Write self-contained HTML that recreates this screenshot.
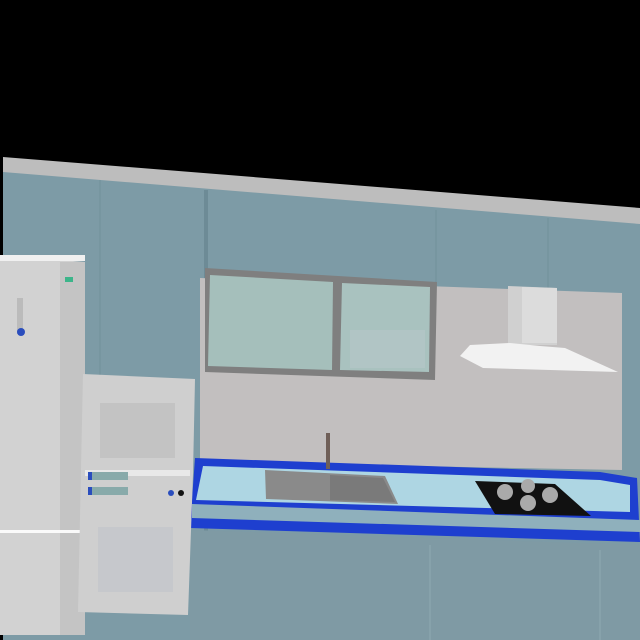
<!DOCTYPE html><html><head><style>body{margin:0;background:#000}svg{display:block}</style></head><body>
<svg width="640" height="640" viewBox="0 0 640 640" xmlns="http://www.w3.org/2000/svg">
<rect width="640" height="640" fill="#000"/>
<!-- ceiling trim -->
<polygon points="3,157 640,208 640,228 3,175" fill="#bdbdbd"/>
<!-- wall cabinets base -->
<polygon points="3,172 640,224 640,640 3,640" fill="#7d9ba6"/>
<polygon points="204,190 208,190 208,640 204,640" fill="#6d8b96"/>
<line x1="100" y1="180" x2="100" y2="375" stroke="#71909b" stroke-width="1"/>
<line x1="436" y1="210" x2="436" y2="282" stroke="#71909b" stroke-width="1"/>
<line x1="548" y1="218" x2="548" y2="290" stroke="#71909b" stroke-width="1"/>
<!-- backsplash -->
<polygon points="200,278 622,293 622,470 200,462" fill="#c2bfbf"/>
<!-- glass cabinets -->
<polygon points="205,268 437,282 435,380 205,372" fill="#7f7f7f"/>
<polygon points="210,275 333,282 332,370 208,366" fill="#a5bfbb"/>
<polygon points="342,283 430,287 429,372 340,370" fill="#a9c2bf"/>
<rect x="350" y="330" width="75" height="38" fill="#b5c6c8" opacity="0.7"/>
<!-- hood -->
<polygon points="508,286 557,288 557,345 508,345" fill="#d0d0d0"/>
<polygon points="522,287 557,288 557,343 522,343" fill="#dcdcdc"/>
<polygon points="470,345 510,343 540,346 565,348 618,372 483,368 460,356" fill="#f2f2f2"/>
<!-- countertop -->
<polygon points="195,458 600,472 637,478 640,542 190,528" fill="#1e3fcf"/>
<polygon points="203,466 600,480 630,485 630,512 196,500" fill="#aed6e3"/>
<polygon points="192,504 640,520 640,532 192,518" fill="#8fb0bc"/>
<polygon points="190,530 640,545 640,640 190,640" fill="#7f9aa4"/>
<line x1="430" y1="545" x2="430" y2="640" stroke="#8fa9b2"/>
<line x1="600" y1="550" x2="600" y2="640" stroke="#8fa9b2"/>
<!-- sink -->
<polygon points="265,470 385,476 398,504 266,499" fill="#8a8a8a"/>
<polygon points="330,475 383,478 395,502 330,500" fill="#7a7a7a"/>
<rect x="326" y="433" width="4" height="36" fill="#6f5f58"/>
<!-- hob -->
<polygon points="475,481 555,484 591,516 495,514" fill="#111"/>
<circle cx="505" cy="492" r="8" fill="#aaa"/><circle cx="528" cy="486" r="7" fill="#aaa"/>
<circle cx="550" cy="495" r="8" fill="#aaa"/><circle cx="528" cy="503" r="8" fill="#aaa"/>
<!-- fridge -->
<polygon points="0,255 85,262 85,635 0,635" fill="#d2d2d2"/>
<rect x="0" y="255" width="85" height="6" fill="#f0f0f0"/>
<rect x="60" y="262" width="25" height="373" fill="#c4c4c4"/>
<rect x="65" y="277" width="8" height="5" fill="#3cb58a"/>
<rect x="17" y="298" width="6" height="36" fill="#bbb"/>
<circle cx="21" cy="332" r="4" fill="#2a4dbd"/>
<rect x="0" y="530" width="80" height="3" fill="#fafafa"/>
<!-- oven tower -->
<polygon points="83,374 195,379 193,474 188,615 78,612" fill="#cfcfcf"/>
<rect x="100" y="403" width="75" height="55" fill="#c3c3c3"/>
<rect x="85" y="470" width="105" height="6" fill="#e8e8e8"/>
<rect x="88" y="472" width="40" height="8" fill="#8aa" /><rect x="88" y="487" width="40" height="8" fill="#8aa"/>
<rect x="88" y="472" width="4" height="8" fill="#2a4dbd"/><rect x="88" y="487" width="4" height="8" fill="#2a4dbd"/>
<circle cx="171" cy="493" r="3" fill="#2a4dbd"/><circle cx="181" cy="493" r="3" fill="#111"/>
<rect x="98" y="527" width="75" height="65" fill="#c6c8cc"/>
</svg>
</body></html>
